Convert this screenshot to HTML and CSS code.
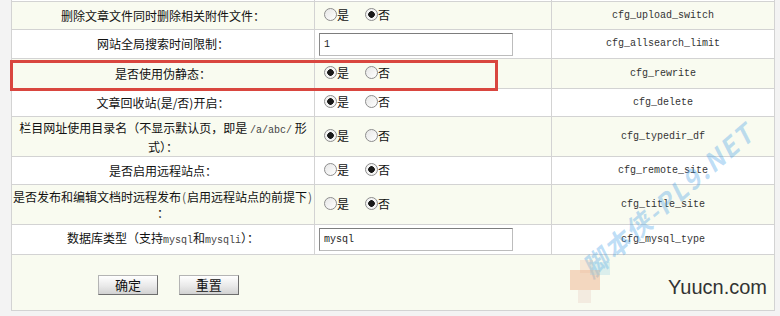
FILE: index.html
```html
<!DOCTYPE html>
<html lang="zh-CN">
<head>
    <meta charset="UTF-8">
    <meta name="viewport" content="width=device-width, initial-scale=1.0">
    <title>系统基本参数</title>
    <link rel="stylesheet" href="styles.css">
</head>
<body>

<div class="page">
<form id="configForm">
<table class="cfg">
    <colgroup>
        <col class="col-name">
        <col class="col-val">
        <col class="col-key">
    </colgroup>
    <tr class="tail"><td></td><td></td><td></td></tr>
    <tr class="alt">
        <td class="name">删除文章文件同时删除相关附件文件：</td>
        <td class="val"><label><input type="radio" name="cfg_upload_switch" value="Y">是</label><label><input type="radio" name="cfg_upload_switch" value="N" checked>否</label></td>
        <td class="key">cfg_upload_switch</td>
    </tr>
    <tr class="h29">
        <td class="name">网站全局搜索时间限制：</td>
        <td class="val"><input type="text" class="txt" name="cfg_allsearch_limit" value="1"></td>
        <td class="key">cfg_allsearch_limit</td>
    </tr>
    <tr class="alt h30">
        <td class="name">是否使用伪静态：</td>
        <td class="val"><label><input type="radio" name="cfg_rewrite" value="Y" checked>是</label><label><input type="radio" name="cfg_rewrite" value="N">否</label></td>
        <td class="key">cfg_rewrite</td>
    </tr>
    <tr>
        <td class="name">文章回收站(是/否)开启：</td>
        <td class="val"><label><input type="radio" name="cfg_delete" value="Y" checked>是</label><label><input type="radio" name="cfg_delete" value="N">否</label></td>
        <td class="key">cfg_delete</td>
    </tr>
    <tr class="alt h39">
        <td class="name two">栏目网址使用目录名（不显示默认页，即是 <span class="code">/a/abc/</span> 形<br>式）：</td>
        <td class="val"><label><input type="radio" name="cfg_typedir_df" value="Y" checked>是</label><label><input type="radio" name="cfg_typedir_df" value="N">否</label></td>
        <td class="key">cfg_typedir_df</td>
    </tr>
    <tr>
        <td class="name">是否启用远程站点：</td>
        <td class="val"><label><input type="radio" name="cfg_remote_site" value="Y">是</label><label><input type="radio" name="cfg_remote_site" value="N" checked>否</label></td>
        <td class="key">cfg_remote_site</td>
    </tr>
    <tr class="alt h39">
        <td class="name two">是否发布和编辑文档时远程发布<span class="paren">(</span>启用远程站点的前提下<span class="paren">)</span><br>：</td>
        <td class="val"><label><input type="radio" name="cfg_title_site" value="Y">是</label><label><input type="radio" name="cfg_title_site" value="N" checked>否</label></td>
        <td class="key">cfg_title_site</td>
    </tr>
    <tr class="h30">
        <td class="name">数据库类型（支持<span class="code">mysql</span>和<span class="code">mysqli</span>）：</td>
        <td class="val"><input type="text" class="txt" name="cfg_mysql_type" value="mysql"></td>
        <td class="key">cfg_mysql_type</td>
    </tr>
    <tr class="alt foot">
        <td colspan="3">
            <button type="submit" class="btn">确定</button>
            <button type="reset" class="btn">重置</button>
        </td>
    </tr>
</table>
</form>

<!-- highlight + watermarks laid over the table -->
<div class="mark-box"></div>
<div class="wm-site">脚本侠-PL9.NET</div>
<div class="wm-blur">
    <span class="px px1"></span>
    <span class="px px2"></span>
    <span class="px px3"></span>
    <span class="px px4"></span>
</div>
<div class="wm-yuucn">Yuucn.com</div>
</div>

</body>
</html>
```

FILE: styles.css
```css
body {
    margin: 0;
    background-color: #f3f3f3;
    font-family: "Noto Sans CJK SC", "Liberation Sans", sans-serif;
    font-size: 12px;
    color: #111;
}

.page {
    position: relative;
    padding-left: 11px;
    height: 316px;
    overflow: hidden;
}

form {
    margin: 0;
}

.cfg {
    width: 764px;
    border-collapse: collapse;
    table-layout: fixed;
    background-color: #fff;
}

.col-name {
    width: 303px;
}

.col-val {
    width: 237px;
}

.cfg td {
    border: 1px solid #d3d3d3;
    padding: 0;
    height: 27px;
    line-height: 16px;
}

.cfg tr.tail td {
    height: 1px;
    border-top: none;
}

.cfg tr.h29 td {
    height: 28px;
}

.cfg tr.h30 td {
    height: 29px;
}

.cfg tr.h39 td {
    height: 38px;
}

.cfg tr.alt td {
    background-color: #f9fbf0;
}

.name {
    text-align: center;
    white-space: nowrap;
    overflow: hidden;
}

.name.two {
    line-height: 16px;
    padding-top: 1px;
}

.paren {
    display: inline-block;
    width: 6px;
    text-align: center;
    color: #555;
}

.code {
    font-family: "Liberation Mono", monospace;
    font-size: 10px;
    color: #444;
}

.val {
    padding-left: 4px !important;
}

.val label {
    display: inline-flex;
    align-items: center;
    margin-right: 2px;
}

.val input[type="radio"] {
    appearance: none;
    -webkit-appearance: none;
    width: 13px;
    height: 13px;
    margin: 0 0 0 5px;
    border: 1px solid #8d8d8d;
    border-radius: 50%;
    background: linear-gradient(135deg, #e6e6e6, #ffffff);
    box-sizing: border-box;
}

.val label + label input[type="radio"] {
    margin-left: 14px;
}

.val input[type="radio"]:checked {
    background: radial-gradient(circle, #1a1a1a 0, #1a1a1a 3px, #f4f4f4 3.6px);
}

.txt {
    width: 194px;
    height: 23px;
    box-sizing: border-box;
    margin: 0;
    padding: 0 4px;
    border: 1px solid #bcbcbc;
    border-top-color: #7d7d7d;
    border-left-color: #8a8a8a;
    font-family: "Liberation Mono", monospace;
    font-size: 10px;
    color: #222;
}

.key {
    text-align: center;
    font-family: "Liberation Mono", monospace;
    font-size: 10px;
    color: #333;
}

.cfg tr.foot td {
    height: 55px;
    padding: 0 0 0 86px;
    vertical-align: top;
}

.btn {
    width: 60px;
    height: 20px;
    margin: 20px 18px 0 0;
    padding: 0;
    border: 1px solid #b4b4b4;
    border-right-color: #6e6e6e;
    border-bottom-color: #6e6e6e;
    background: linear-gradient(#ffffff, #e9e9e9 55%, #d2d2d2);
    font-family: "Noto Sans CJK SC", sans-serif;
    font-size: 13px;
    line-height: 18px;
    color: #111;
    cursor: pointer;
}

.mark-box {
    position: absolute;
    left: 10px;
    top: 60px;
    width: 482px;
    height: 25px;
    border: 3px solid #d9463f;
    pointer-events: none;
}

.wm-site {
    position: absolute;
    left: 585px;
    top: 252px;
    transform: rotate(-41deg);
    transform-origin: left center;
    font-family: "Noto Sans CJK SC", sans-serif;
    font-weight: bold;
    font-style: italic;
    font-size: 26px;
    letter-spacing: 2px;
    color: rgba(70, 160, 230, 0.35);
    white-space: nowrap;
    pointer-events: none;
}

.wm-blur {
    position: absolute;
    left: 570px;
    top: 260px;
    width: 40px;
    height: 40px;
    pointer-events: none;
}

.px {
    position: absolute;
    width: 13px;
    height: 13px;
}

.px1 {
    left: 0;
    top: 10px;
    width: 30px;
    height: 20px;
    background-color: rgba(235, 170, 130, 0.45);
}

.px2 {
    left: 10px;
    top: 0;
    background-color: rgba(240, 190, 160, 0.3);
}

.px3 {
    left: 20px;
    top: 2px;
    width: 20px;
    background-color: rgba(150, 210, 230, 0.3);
}

.px4 {
    left: 8px;
    top: 30px;
    background-color: rgba(230, 200, 190, 0.3);
}

.wm-yuucn {
    position: absolute;
    right: 13px;
    top: 276px;
    font-family: "Liberation Sans", Arial, sans-serif;
    font-size: 20px;
    color: #333;
}
```
